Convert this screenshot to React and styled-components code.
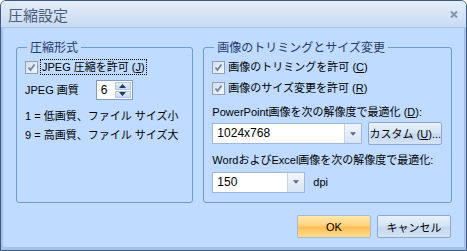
import React from 'react';
import styled, { createGlobalStyle } from 'styled-components';

const Global = createGlobalStyle`
  html, body { margin: 0; padding: 0; background: #ffffff; }
  body { font-family: "Liberation Sans", "Noto Sans CJK JP", sans-serif; font-size: 11px; color: #000; }
`;

const Window = styled.div`
  width: 467px;
  height: 251px;
  box-sizing: border-box;
  border: 1px solid #3b5b87;
  border-radius: 6px 6px 0 0;
  background: #bfdbff;
  display: flex;
  flex-direction: column;
  overflow: hidden;
`;

const TitleBar = styled.div`
  height: 26px;
  flex: none;
  display: flex;
  align-items: center;
  justify-content: space-between;
  padding: 0 8px 0 7px;
  background: linear-gradient(#e4edf9, #d5e3f5 55%, #c9dbf1);
  border-bottom: 1px solid #a9c5e9;
  font-family: "Noto Sans CJK JP", sans-serif;
  font-size: 15px;
  color: #4a5c7a;
`;

const Body = styled.div`
  flex: 1;
  display: flex;
  flex-direction: column;
  padding: 12px 12px 0 13px;
  border-left: 2px solid #a6c1e4;
  border-right: 2px solid #a6c1e4;
  border-bottom: 3px solid #a6c1e4;
`;

const GroupRow = styled.div`
  display: flex;
  gap: 10px;
  height: 163px;
`;

const Group = styled.fieldset`
  margin: 0;
  padding: 0 8px;
  min-width: 0;
  width: ${p => p.$w}px;
  box-sizing: border-box;
  border: 1px solid #6f9ad0;
  border-radius: 3px;
  display: flex;
  flex-direction: column;
`;

const Legend = styled.legend`
  padding: 0 3px;
  margin-left: 2px;
  font-family: "Noto Sans CJK JP", sans-serif;
  font-size: 12px;
  line-height: 14px;
  color: #1f3c6a;
`;

const Row = styled.div`
  display: flex;
  align-items: center;
  height: ${p => p.$h || 14}px;
  margin-top: ${p => p.$mt || 0}px;
  gap: ${p => p.$gap || 0}px;
  white-space: nowrap;
  line-height: 14px;
`;

const Box = styled.span`
  width: 11px;
  height: 11px;
  flex: none;
  border: 1px solid #8e9fb9;
  background: linear-gradient(135deg, #d6dde8, #f4f6f9);
  display: inline-flex;
  align-items: center;
  justify-content: center;
  margin-right: 3px;
`;

const Focus = styled.span`
  outline: 1px dotted #000;
  outline-offset: 0px;
  padding: 0 1px;
`;

const Spin = styled.div`
  width: 37px;
  height: 20px;
  box-sizing: border-box;
  border: 1px solid #7f9dc4;
  background: #fff;
  display: flex;
  margin-left: 17px;
`;

const SpinValue = styled.div`
  flex: 1;
  padding-left: 4px;
  line-height: 18px;
  font-size: 12px;
`;

const SpinButtons = styled.div`
  width: 16px;
  display: flex;
  flex-direction: column;
  gap: 1px;
  padding: 1px;
`;

const SpinButton = styled.div`
  flex: 1;
  background: linear-gradient(#e6eefa, #c9dbf2);
  border: 1px solid #b2c7e4;
  display: flex;
  align-items: center;
  justify-content: center;
`;

const Combo = styled.div`
  width: ${p => p.$w}px;
  height: 21px;
  box-sizing: border-box;
  border: 1px solid #9fb8da;
  background: #fff;
  display: flex;
  align-items: stretch;
`;

const ComboValue = styled.div`
  flex: 1;
  padding-left: 4px;
  line-height: 19px;
  font-size: 12px;
`;

const ComboButton = styled.div`
  width: 16px;
  border-left: 1px solid #c4d5ec;
  background: linear-gradient(#f1f5fb, #d9e5f5);
  display: flex;
  align-items: center;
  justify-content: center;
`;

const Button = styled.div`
  width: ${p => p.$w || 74}px;
  height: 23px;
  box-sizing: border-box;
  border: 1px solid ${p => (p.$primary ? '#a8b9cf' : '#8ea8cc')};
  border-radius: 2px;
  display: flex;
  align-items: center;
  justify-content: center;
  font-size: 11px;
  background: ${p =>
    p.$primary
      ? 'linear-gradient(#ffe9ad, #ffd27e 45%, #ffbf55 55%, #ffdd92)'
      : 'linear-gradient(#e9f0fa, #d7e4f5 45%, #c6d8ef 55%, #d5e3f5)'};
`;

const Footer = styled.div`
  display: flex;
  justify-content: flex-end;
  gap: 6px;
  margin-top: 12px;
  padding-right: 1px;
`;

const Check = () => (
  <Box>
    <svg width="9" height="9" viewBox="0 0 9 9">
      <path d="M1.5 4.5 L3.5 7 L7.5 1.5" fill="none" stroke="#6d86ad" strokeWidth="1.8" />
    </svg>
  </Box>
);

const Tri = ({ up, color = '#1c3a6b', w = 7 }) => (
  <svg width={w} height="4" viewBox="0 0 7 4">
    <path d={up ? 'M0 4 L3.5 0 L7 4 Z' : 'M0 0 L7 0 L3.5 4 Z'} fill={color} />
  </svg>
);

export default function App() {
  return (
    <>
      <Global />
      <Window>
        <TitleBar>
          <span>圧縮設定</span>
          <svg width="8" height="7" viewBox="0 0 8 7">
            <path d="M1 0.5 L7 6.5 M7 0.5 L1 6.5" stroke="#8494ab" strokeWidth="2" />
          </svg>
        </TitleBar>
        <Body>
          <GroupRow>
            <Group $w={179}>
              <Legend>圧縮形式</Legend>
              <Row $mt={6}>
                <Check />
                <Focus>JPEG 圧縮を許可 (<u>J</u>)</Focus>
              </Row>
              <Row $h={20} $mt={6}>
                JPEG 画質
                <Spin>
                  <SpinValue>6</SpinValue>
                  <SpinButtons>
                    <SpinButton><Tri up /></SpinButton>
                    <SpinButton><Tri /></SpinButton>
                  </SpinButtons>
                </Spin>
              </Row>
              <Row $mt={9}>1 = 低画質、ファイル サイズ小</Row>
              <Row $mt={5}>9 = 高画質、ファイル サイズ大</Row>
            </Group>
            <Group $w={251}>
              <Legend>画像のトリミングとサイズ変更</Legend>
              <Row $mt={6}>
                <Check />
                画像のトリミングを許可 (<u>C</u>)
              </Row>
              <Row $mt={7}>
                <Check />
                画像のサイズ変更を許可 (<u>R</u>)
              </Row>
              <Row $mt={10}>PowerPoint画像を次の解像度で最適化 (<u>D</u>):</Row>
              <Row $h={21} $mt={4} $gap={6}>
                <Combo $w={150}>
                  <ComboValue>1024x768</ComboValue>
                  <ComboButton><Tri color="#4a6a98" w={6} /></ComboButton>
                </Combo>
                <Button $w={74}>カスタム (<u>U</u>)...</Button>
              </Row>
              <Row $mt={9}>WordおよびExcel画像を次の解像度で最適化:</Row>
              <Row $h={22} $mt={4} $gap={8}>
                <Combo $w={93}>
                  <ComboValue>150</ComboValue>
                  <ComboButton><Tri color="#4a6a98" w={6} /></ComboButton>
                </Combo>
                dpi
              </Row>
            </Group>
          </GroupRow>
          <Footer>
            <Button $primary>OK</Button>
            <Button>キャンセル</Button>
          </Footer>
        </Body>
      </Window>
    </>
  );
}
